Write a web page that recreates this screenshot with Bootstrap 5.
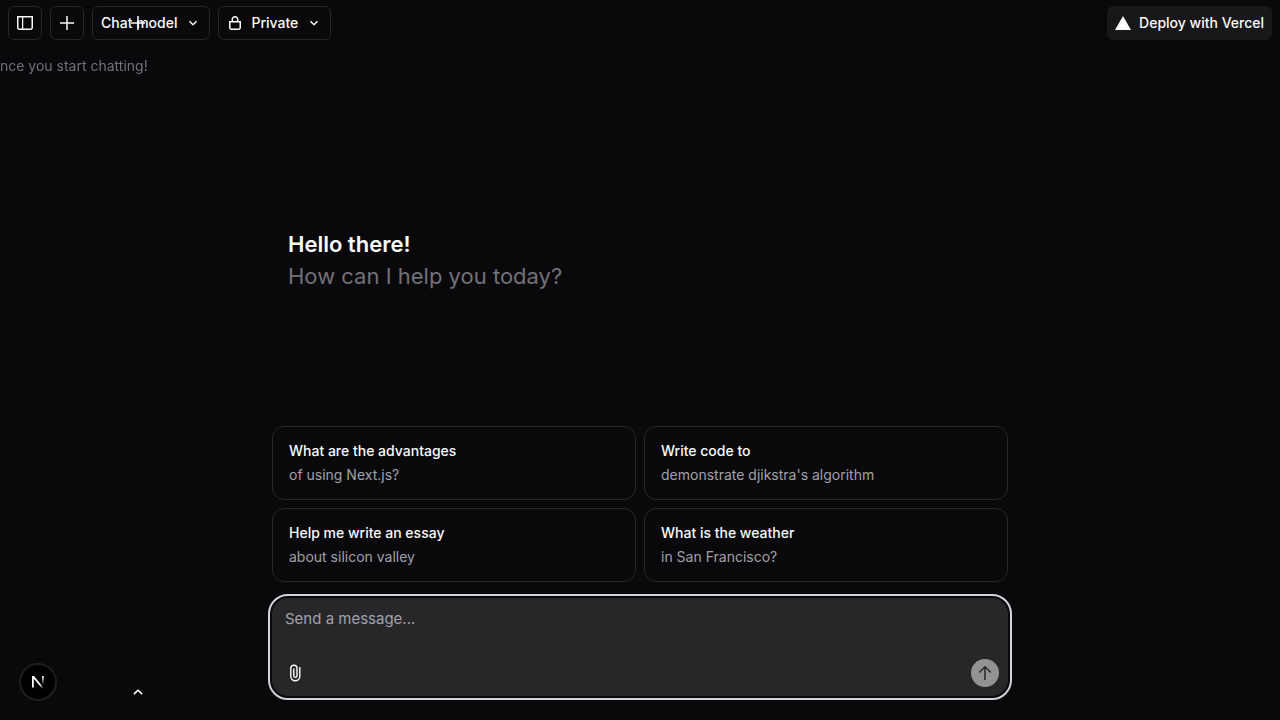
<!DOCTYPE html>
<html lang="en" data-bs-theme="dark">
<head>
<meta charset="utf-8">
<meta name="viewport" content="width=device-width, initial-scale=1">
<title>Chatbot</title>
<link href="https://cdn.jsdelivr.net/npm/bootstrap@5.3.0/dist/css/bootstrap.min.css" rel="stylesheet">
<style>
  body { background: #09090b; color: #fafafa; font-family: Inter, "Liberation Sans", sans-serif; font-size: 14px; line-height: 20px; }
  svg { fill: currentColor; flex: none; }
  .tool { --bs-btn-color: #fafafa; --bs-btn-border-color: #27272a; --bs-btn-bg: #09090b; --bs-btn-hover-bg: #27272a; --bs-btn-border-radius: 6px;
    --bs-btn-font-size: 14px; --bs-btn-font-weight: 500; --bs-btn-line-height: 20px; --bs-btn-padding-x: 8px; --bs-btn-padding-y: 6px; height: 34px; }
  .tool-deploy { --bs-btn-bg: #18181b; --bs-btn-border-color: #18181b; --bs-btn-padding-x: 7px; }
  .tool-square { width: 34px; padding: 0; }
  .topbar { padding: 6px 8px; }
  .side { width: 150px; pointer-events: none; }
  .side-btn { color: #fafafa; width: 24px; height: 34px; }
  .side-top { padding: 6px 0; }
  .side-note { color: #71717a; padding: 10px 0; }
  .side-foot { padding-bottom: 11px; }
  .column { width: 100%; max-width: 768px; }
  .hello { font-size: 22px; line-height: 32px; }
  .dim { color: #71717a; }
  .tip { --bs-btn-border-color: #27272a; --bs-btn-color: #fafafa; --bs-btn-hover-bg: #27272a; --bs-btn-border-radius: 12px;
    --bs-btn-font-size: 14px; --bs-btn-line-height: 20px; --bs-btn-padding-x: 16px; --bs-btn-padding-y: 14px; font-weight: 500; }
  .tip-sub { color: #a1a1aa; font-weight: 400; }
  .composer { background: #27272a; border-radius: 16px; outline: 2px solid #d4d4d8; outline-offset: 2px; }
  .composer textarea, .composer textarea:focus { background: transparent; border: 0; box-shadow: none; resize: none; color: #fafafa;
    font-size: 15px; line-height: 24px; height: 61px; min-height: 0; padding: 9px 13px; }
  .composer textarea::placeholder { color: #a1a1aa; }
  .composer-bar { padding: 0 9px 9px; }
  .clip-btn { color: #fafafa; width: 28px; height: 28px; }
  .send-btn { background: #939394; color: #27272a; width: 28px; height: 28px; }
  .dev-btn { background: #000; color: #fff; width: 36px; height: 36px; left: 20px; bottom: 20px; box-shadow: 0 0 0 1px #222224, inset 0 0 0 1px #222224; }
</style>
</head>
<body>
<div class="d-flex flex-column min-vh-100">
  <header class="topbar d-flex align-items-center gap-2">
    <button type="button" class="btn tool tool-square d-flex align-items-center justify-content-center" aria-label="Toggle sidebar">
      <svg width="16" height="16" viewBox="0 0 16 16"><path fill-rule="evenodd" d="M6.245 2.5H14.5V12.5C14.5 13.0523 14.0523 13.5 13.5 13.5H6.245V2.5ZM4.995 2.5H1.5V12.5C1.5 13.0523 1.94772 13.5 2.5 13.5H4.995V2.5ZM0 1H16V12.5C16 13.8807 14.8807 15 13.5 15H2.5C1.11929 15 0 13.8807 0 12.5V1Z"/></svg>
    </button>
    <button type="button" class="btn tool tool-square d-flex align-items-center justify-content-center" aria-label="New chat">
      <svg width="16" height="16" viewBox="0 0 16 16"><path d="M8.75 1V7.25H15V8.75H8.75V15H7.25V8.75H1V7.25H7.25V1Z"/></svg>
    </button>
    <button type="button" class="btn tool d-flex align-items-center gap-2">Chat model
      <svg width="16" height="16" viewBox="0 0 16 16"><path d="M12.0607 6.75L8.7071 10.1035C8.3166 10.4941 7.6834 10.4941 7.2929 10.1035L3.9393 6.75L5 5.6893L8 8.6893L11 5.6893Z"/></svg>
    </button>
    <button type="button" class="btn tool d-flex align-items-center gap-2">
      <svg width="16" height="16" viewBox="0 0 16 16"><path fill-rule="evenodd" d="M10 4.5V6H6V4.5C6 3.39543 6.89543 2.5 8 2.5C9.10457 2.5 10 3.39543 10 4.5ZM4.5 6V4.5C4.5 2.567 6.067 1 8 1C9.933 1 11.5 2.567 11.5 4.5V6H14V12.5C14 13.8807 12.8807 15 11.5 15H4.5C3.11929 15 2 13.8807 2 12.5V6H4.5ZM12.5 7.5H3.5V12.5C3.5 13.0523 3.94772 13.5 4.5 13.5H11.5C12.0523 13.5 12.5 13.0523 12.5 12.5V7.5Z"/></svg>
      Private
      <svg width="16" height="16" viewBox="0 0 16 16"><path d="M12.0607 6.75L8.7071 10.1035C8.3166 10.4941 7.6834 10.4941 7.2929 10.1035L3.9393 6.75L5 5.6893L8 8.6893L11 5.6893Z"/></svg>
    </button>
    <a href="#" class="btn tool tool-deploy d-flex align-items-center gap-2 ms-auto">
      <svg width="16" height="16" viewBox="0 0 16 16"><path d="M8 1L16 15H0Z"/></svg>
      Deploy with Vercel
    </a>
  </header>

  <main class="flex-grow-1 d-flex flex-column align-items-center">
    <section class="column flex-grow-1 d-flex flex-column justify-content-center px-3 pt-5">
      <div class="hello px-3">
        <div class="fw-semibold">Hello there!</div>
        <div class="dim">How can I help you today?</div>
      </div>
    </section>
    <form class="column d-flex flex-column gap-3 px-3 pb-4">
      <div class="row row-cols-1 row-cols-sm-2 g-2">
        <div class="col"><button type="button" class="btn tip w-100 text-start d-flex flex-column gap-1"><span>What are the advantages</span><span class="tip-sub">of using Next.js?</span></button></div>
        <div class="col"><button type="button" class="btn tip w-100 text-start d-flex flex-column gap-1"><span>Write code to</span><span class="tip-sub">demonstrate djikstra's algorithm</span></button></div>
        <div class="col"><button type="button" class="btn tip w-100 text-start d-flex flex-column gap-1"><span>Help me write an essay</span><span class="tip-sub">about silicon valley</span></button></div>
        <div class="col"><button type="button" class="btn tip w-100 text-start d-flex flex-column gap-1"><span>What is the weather</span><span class="tip-sub">in San Francisco?</span></button></div>
      </div>
      <div class="composer">
        <textarea class="form-control" aria-label="Message" placeholder="Send a message..."></textarea>
        <div class="composer-bar d-flex justify-content-between">
          <button type="button" class="clip-btn btn p-0 border-0 d-flex align-items-center justify-content-center" aria-label="Attach files">
            <svg width="12" height="18" viewBox="0 0 12 18"><path fill="none" stroke="currentColor" stroke-width="1.4" d="M10.8 3V12.3A4.5 4.5 0 0 1 1.8 12.3V4.3A3.1 3.1 0 0 1 8 4.3V11.8A1.6 1.6 0 0 1 4.8 11.8V4.5"/></svg>
          </button>
          <button type="submit" class="send-btn btn p-0 border-0 rounded-circle d-flex align-items-center justify-content-center" aria-label="Send message">
            <svg width="16" height="16" viewBox="0 0 16 16"><path d="M8.7071 1.3964C8.3166 1.0059 7.6834 1.0059 7.2929 1.3964L1.6893 7L2.75 8.0607L7.25 3.5607V15H8.75V3.5607L13.25 8.0607L14.3107 7Z"/></svg>
          </button>
        </div>
      </div>
    </form>
  </main>
</div>

<aside class="side position-fixed top-0 start-0 h-100 d-flex flex-column overflow-hidden">
  <div class="side-top d-flex justify-content-end">
    <button type="button" class="side-btn btn p-0 border-0 d-flex align-items-center justify-content-center" aria-label="New conversation">
      <svg width="16" height="16" viewBox="0 0 16 16"><path d="M8.75 1V7.25H15V8.75H8.75V15H7.25V8.75H1V7.25H7.25V1Z"/></svg>
    </button>
  </div>
  <div class="side-note text-nowrap">nce you start chatting!</div>
  <div class="side-foot d-flex justify-content-end mt-auto">
    <button type="button" class="side-btn btn p-0 border-0 d-flex align-items-center justify-content-center" aria-label="Account menu">
      <svg width="16" height="16" viewBox="0 0 16 16"><path d="M12.6 9.6L8.7071 5.7C8.3166 5.3 7.6834 5.3 7.2929 5.7L3.4 9.6L4.5 10.7L8 7.2L11.5 10.7Z"/></svg>
    </button>
  </div>
</aside>

<button type="button" class="dev-btn btn p-0 border-0 rounded-circle position-fixed d-flex align-items-center justify-content-center" aria-label="Open developer tools">
  <svg width="14" height="14" viewBox="0 0 14 14">
    <defs>
      <linearGradient id="fadeDiag" x1="6" y1="6" x2="12" y2="13" gradientUnits="userSpaceOnUse"><stop offset=".5" stop-color="#fff"/><stop offset="1" stop-color="#fff" stop-opacity="0.1"/></linearGradient>
      <linearGradient id="fadeBar" x1="0" y1="1" x2="0" y2="10" gradientUnits="userSpaceOnUse"><stop stop-color="#fff"/><stop offset="1" stop-color="#fff" stop-opacity="0"/></linearGradient>
    </defs>
    <path fill="url(#fadeDiag)" d="M1 1H3L13 13.2L11.6 14L2.8 3.7V12.6H1Z"/>
    <path fill="url(#fadeBar)" d="M11 1H12.8V10H11Z"/>
  </svg>
</button>
<script src="https://cdn.jsdelivr.net/npm/bootstrap@5.3.0/dist/js/bootstrap.bundle.min.js"></script>
</body>
</html>
